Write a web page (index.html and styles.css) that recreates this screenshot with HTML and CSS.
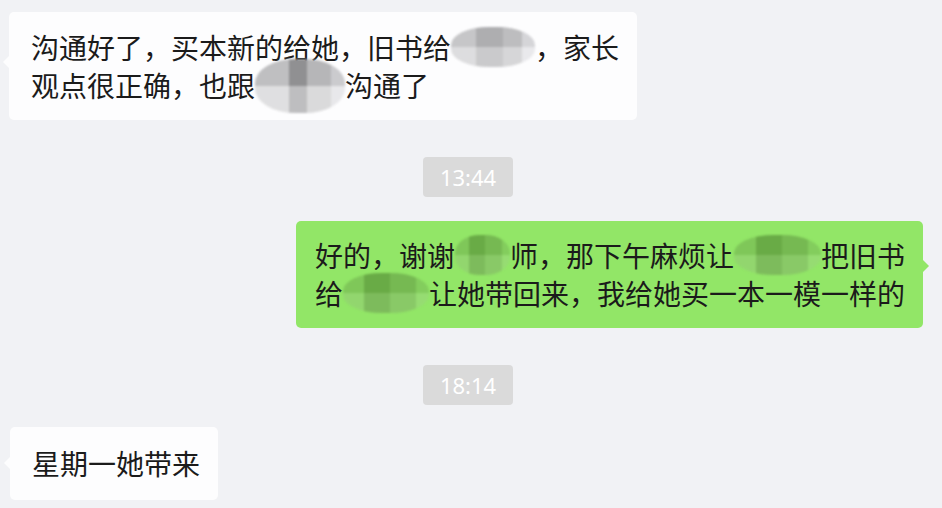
FILE: index.html
```html
<!DOCTYPE html>
<html lang="zh-CN">
<head>
    <meta charset="UTF-8">
    <meta name="viewport" content="width=device-width, initial-scale=1.0">
    <title>聊天记录</title>
    <link rel="stylesheet" href="styles.css">
</head>
<body>
    <div class="chat">
        <div class="msg left first">
            沟通好了，买本新的给她，旧书给<span class="mask gray w84"></span>，家长<br>
            观点很正确，也跟<span class="mask gray tall w90"></span>沟通了
        </div>

        <div class="time">13:44</div>

        <div class="msg right">
            好的，谢谢<span class="mask green w55"></span>师，那下午麻烦让<span class="mask green w87"></span>把旧书<br>
            给<span class="mask green w86"></span>让她带回来，我给她买一本一模一样的
        </div>

        <div class="time">18:14</div>

        <div class="msg left last">星期一她带来</div>
    </div>
</body>
</html>
```

FILE: styles.css
```css
body {
    margin: 0;
    background-color: #f1f2f5;
    font-family: "Noto Sans CJK SC", "Noto Sans", sans-serif;
    color: #1b1b1b;
}
.chat {
    display: flex;
    flex-direction: column;
    padding: 12px 19px 0 9px;
}
.msg {
    position: relative;
    font-size: 28px;
    line-height: 38px;
    border-radius: 5px;
    white-space: nowrap;
}
.msg.left {
    align-self: flex-start;
    background-color: #fdfdfe;
    padding: 16px 18px 16px 22px;
}
.msg.right {
    align-self: flex-end;
    background-color: #92e667;
    padding: 15px 18px 16px 19px;
    margin-top: 24px;
}
.msg.left::before,
.msg.right::after {
    content: "";
    position: absolute;
    top: 43px;
    border: 7px solid transparent;
}
.msg.left::before {
    left: -13px;
    border-right-color: #fdfdfe;
}
.msg.right::after {
    top: 38px;
    right: -13px;
    border-left-color: #92e667;
}
.msg.last {
    margin-top: 22px;
    margin-left: 1px;
    padding-top: 17px;
    padding-bottom: 18px;
}
.msg.last::before {
    top: 29px;
}
.time {
    align-self: center;
    margin: 37px 0 0 4px;
    width: 90px;
    height: 40px;
    line-height: 40px;
    text-align: center;
    border-radius: 4px;
    background-color: #dadada;
    color: #fff;
    font-family: "Noto Sans", Roboto, sans-serif;
    font-size: 22px;
}

/* mosaic over the hidden names */
.mask {
    position: relative;
    z-index: 1;
    display: inline-block;
    height: 40px;
    margin: -2px 0;
    vertical-align: -6px;
    border-radius: 45%;
    filter: blur(1px);
}
.mask.tall {
    height: 54px;
    margin: -10px 0;
}
.mask.gray {
    background:
        linear-gradient(to bottom, rgba(0, 0, 0, 0.06) 50%, rgba(255, 255, 255, 0.25) 50%),
        linear-gradient(to right, #d2d2d4 0 30%, #b9b9bb 30% 62%, #c9c9cb 62% 85%, #e2e2e6 85%);
}
.mask.gray.tall {
    background:
        linear-gradient(to bottom, rgba(0, 0, 0, 0.08) 50%, rgba(255, 255, 255, 0.35) 50%),
        linear-gradient(to right, #cfcfd1 0 38%, #9c9c9e 38% 58%, #c6c6c8 58% 85%, #dcdce0 85%);
}
.mask.green {
    background:
        linear-gradient(to bottom, rgba(0, 0, 0, 0.05) 50%, rgba(255, 255, 255, 0.1) 50%),
        linear-gradient(to right, #86d25e 0 25%, #6fb44a 25% 55%, #7cc356 55% 85%, #8ad862 85%);
}
.w55 { width: 55px; }
.w84 { width: 84px; }
.w86 { width: 86px; }
.w87 { width: 87px; }
.w90 { width: 90px; }
```
